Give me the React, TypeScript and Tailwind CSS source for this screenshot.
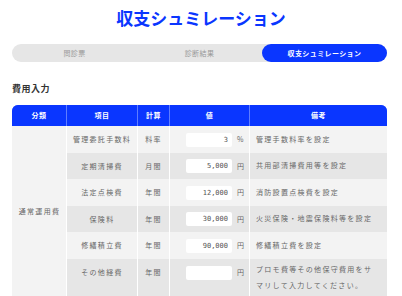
import React from 'react'

// 費用データ
const rows = [
  { item: '管理委託手数料', calc: '料率', value: '3', unit: '%', note: '管理手数料率を設定' },
  { item: '定期清掃費', calc: '月間', value: '5,000', unit: '円', note: '共用部清掃費用等を設定' },
  { item: '法定点検費', calc: '年間', value: '12,000', unit: '円', note: '消防設置点検費を設定' },
  { item: '保険料', calc: '年間', value: '30,000', unit: '円', note: '火災保険・地震保険料等を設定' },
  { item: '修繕積立費', calc: '年間', value: '90,000', unit: '円', note: '修繕積立費を設定' },
  { item: 'その他経費', calc: '年間', value: '', unit: '円', note: 'プロモ費等その他保守費用をサマリして入力してください。' },
]

const tabs = ['問診票', '診断結果', '収支シュミレーション']

const App = () => {
  const [activeTab, setActiveTab] = React.useState(2)

  return (
    <div className="min-h-[296px] bg-white px-3 font-['Noto_Sans_CJK_JP','Noto_Sans',sans-serif]">
      {/* Title */}
      <h1 className="pt-[6px] text-center text-[17px] leading-[24px] font-bold text-[#0a36ff]">収支シュミレーション</h1>

      {/* Tabs */}
      <div className="mt-[14px] grid h-[18px] w-[375px] grid-cols-3 rounded-full bg-[#e6e6e6]">
        {tabs.map((t, i) => (
          <button
            key={t}
            onClick={() => setActiveTab(i)}
            className={
              i === activeTab
                ? 'flex items-center justify-center rounded-full bg-[#0a36ff] text-[7px] font-bold tracking-[0.4px] text-white'
                : 'flex items-center justify-center rounded-full text-[7px] tracking-[0.4px] text-[#9a9a9a]'
            }
          >
            {t}
          </button>
        ))}
      </div>

      {/* Section */}
      <h2 className="mt-[20px] text-[9px] leading-[14px] font-bold tracking-[0.5px] text-[#333]">費用入力</h2>

      <div className="mt-[9px] w-[375px]">
        {/* Table header */}
        <div className="grid h-[21px] grid-cols-[54px_70px_31px_79px_137px] gap-x-px overflow-hidden rounded-t-[6px] bg-[#5f7dff] text-[7px] font-bold tracking-[0.5px] text-white">
          <div className="flex items-center justify-center bg-[#0a36ff]">分類</div>
          <div className="flex items-center justify-center bg-[#0a36ff]">項目</div>
          <div className="flex items-center justify-center bg-[#0a36ff]">計算</div>
          <div className="flex items-center justify-center bg-[#0a36ff]">値</div>
          <div className="flex items-center justify-center bg-[#0a36ff]">備考</div>
        </div>

        {/* Table body */}
        <div className="grid grid-cols-[54px_70px_31px_79px_137px] grid-rows-[27px_26px_27px_26px_27px_37px] gap-x-px bg-white text-[7px] tracking-[1.3px] text-[#666]">
          <div className="row-span-6 flex items-center justify-center bg-[#f3f3f3] pl-[1px]">通常運用費</div>
          {rows.map((r, i) => {
            const bg = i % 2 === 0 ? 'bg-[#f3f3f3]' : 'bg-[#e6e6e6]'
            return (
              <React.Fragment key={r.item}>
                <div className={bg}>
                  <div className="flex h-full max-h-[27px] items-center justify-center">{r.item}</div>
                </div>
                <div className={bg}>
                  <div className="flex h-full max-h-[27px] items-center justify-center">{r.calc}</div>
                </div>
                <div className={bg}>
                  <div className="flex h-full max-h-[27px] items-center justify-end gap-[5px] pr-[3px]">
                    <input
                      readOnly
                      value={r.value}
                      className="h-[14px] w-[46px] rounded-[2px] bg-white pr-[4px] text-right font-['DejaVu_Sans_Mono',monospace] text-[7px] tracking-normal text-[#555] outline-none"
                    />
                    <span className="w-[9px] tracking-normal">{r.unit}</span>
                  </div>
                </div>
                <div className={`${bg} flex items-center pr-[10px] pl-[6px] leading-[15.5px]`}>{r.note}</div>
              </React.Fragment>
            )
          })}
        </div>
      </div>
    </div>
  )
}

export default App
